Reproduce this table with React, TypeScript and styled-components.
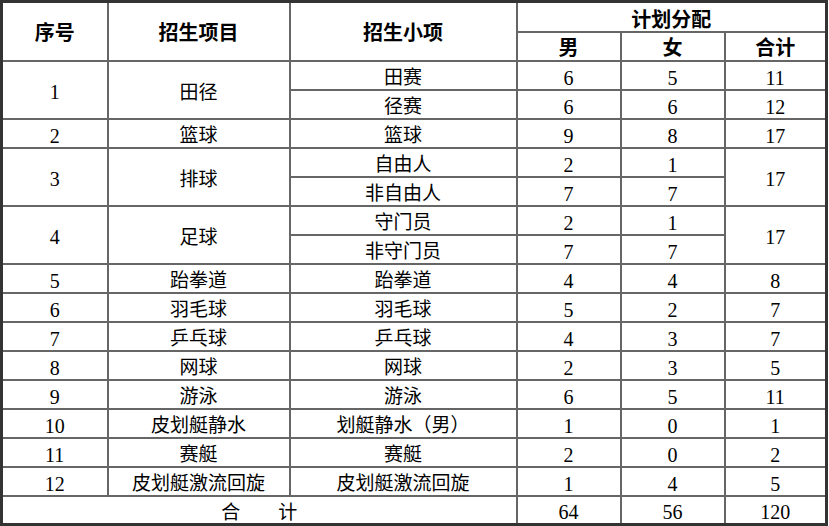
import React from 'react';
import styled, { createGlobalStyle } from 'styled-components';

const GlobalStyle = createGlobalStyle`
  html, body {
    margin: 0;
    padding: 0;
    background: #ffffff;
  }
`;

const Page = styled.div`
  width: 829px;
  height: 526px;
  background: #ffffff;
`;

const Table = styled.table`
  width: 828px;
  border-collapse: collapse;
  table-layout: fixed;
  border: 3px solid #333333;
  font-family: 'Liberation Serif', 'Noto Sans CJK SC', serif;
  color: #000000;
`;

const Row = styled.tr<{ $h?: number }>`
  height: ${(p) => p.$h ?? 29}px;
`;

const HeadCell = styled.th<{ $shift?: number }>`
  border: 2px solid #666666;
  padding: 0;
  padding-top: ${(p) => p.$shift ?? 4}px;
  font-size: 20px;
  font-weight: 700;
  text-align: center;
  vertical-align: middle;
  line-height: 1;
`;

const Cell = styled.td<{ $num?: boolean }>`
  border: 2px solid #666666;
  padding: 0;
  padding-top: 5px;
  font-size: ${(p) => (p.$num ? 20 : 19)}px;
  font-weight: 400;
  text-align: center;
  vertical-align: middle;
  line-height: 1;
  white-space: nowrap;
`;

type Item = { name: string; m: number; f: number; total?: number };
type Group = { no: number; sport: string; items: Item[]; total?: number };

const groups: Group[] = [
  { no: 1, sport: '田径', items: [{ name: '田赛', m: 6, f: 5, total: 11 }, { name: '径赛', m: 6, f: 6, total: 12 }] },
  { no: 2, sport: '篮球', items: [{ name: '篮球', m: 9, f: 8, total: 17 }] },
  { no: 3, sport: '排球', items: [{ name: '自由人', m: 2, f: 1 }, { name: '非自由人', m: 7, f: 7 }], total: 17 },
  { no: 4, sport: '足球', items: [{ name: '守门员', m: 2, f: 1 }, { name: '非守门员', m: 7, f: 7 }], total: 17 },
  { no: 5, sport: '跆拳道', items: [{ name: '跆拳道', m: 4, f: 4, total: 8 }] },
  { no: 6, sport: '羽毛球', items: [{ name: '羽毛球', m: 5, f: 2, total: 7 }] },
  { no: 7, sport: '乒乓球', items: [{ name: '乒乓球', m: 4, f: 3, total: 7 }] },
  { no: 8, sport: '网球', items: [{ name: '网球', m: 2, f: 3, total: 5 }] },
  { no: 9, sport: '游泳', items: [{ name: '游泳', m: 6, f: 5, total: 11 }] },
  { no: 10, sport: '皮划艇静水', items: [{ name: '划艇静水（男）', m: 1, f: 0, total: 1 }] },
  { no: 11, sport: '赛艇', items: [{ name: '赛艇', m: 2, f: 0, total: 2 }] },
  { no: 12, sport: '皮划艇激流回旋', items: [{ name: '皮划艇激流回旋', m: 1, f: 4, total: 5 }] },
];

const App = () => {
  return (
    <Page>
      <GlobalStyle />
      <Table>
        <colgroup>
          <col style={{ width: 106 }} />
          <col style={{ width: 182 }} />
          <col style={{ width: 227 }} />
          <col style={{ width: 104 }} />
          <col style={{ width: 104 }} />
          <col style={{ width: 102 }} />
        </colgroup>
        <thead>
          <Row $h={30}>
            <HeadCell rowSpan={2}>序号</HeadCell>
            <HeadCell rowSpan={2}>招生项目</HeadCell>
            <HeadCell rowSpan={2}>招生小项</HeadCell>
            <HeadCell colSpan={3} $shift={6}>
              计划分配
            </HeadCell>
          </Row>
          <Row $h={29}>
            <HeadCell $shift={3}>男</HeadCell>
            <HeadCell $shift={3}>女</HeadCell>
            <HeadCell $shift={3}>合计</HeadCell>
          </Row>
        </thead>
        <tbody>
          {groups.map((g) =>
            g.items.map((it, i) => (
              <Row key={`${g.no}-${i}`}>
                {i === 0 && (
                  <>
                    <Cell $num rowSpan={g.items.length}>
                      {g.no}
                    </Cell>
                    <Cell rowSpan={g.items.length}>{g.sport}</Cell>
                  </>
                )}
                <Cell>{it.name}</Cell>
                <Cell $num>{it.m}</Cell>
                <Cell $num>{it.f}</Cell>
                {it.total !== undefined ? (
                  <Cell $num>{it.total}</Cell>
                ) : (
                  i === 0 && (
                    <Cell $num rowSpan={g.items.length}>
                      {g.total}
                    </Cell>
                  )
                )}
              </Row>
            ))
          )}
          <Row>
            <Cell colSpan={3}>合　　计</Cell>
            <Cell $num>64</Cell>
            <Cell $num>56</Cell>
            <Cell $num>120</Cell>
          </Row>
        </tbody>
      </Table>
    </Page>
  );
};

export default App;
